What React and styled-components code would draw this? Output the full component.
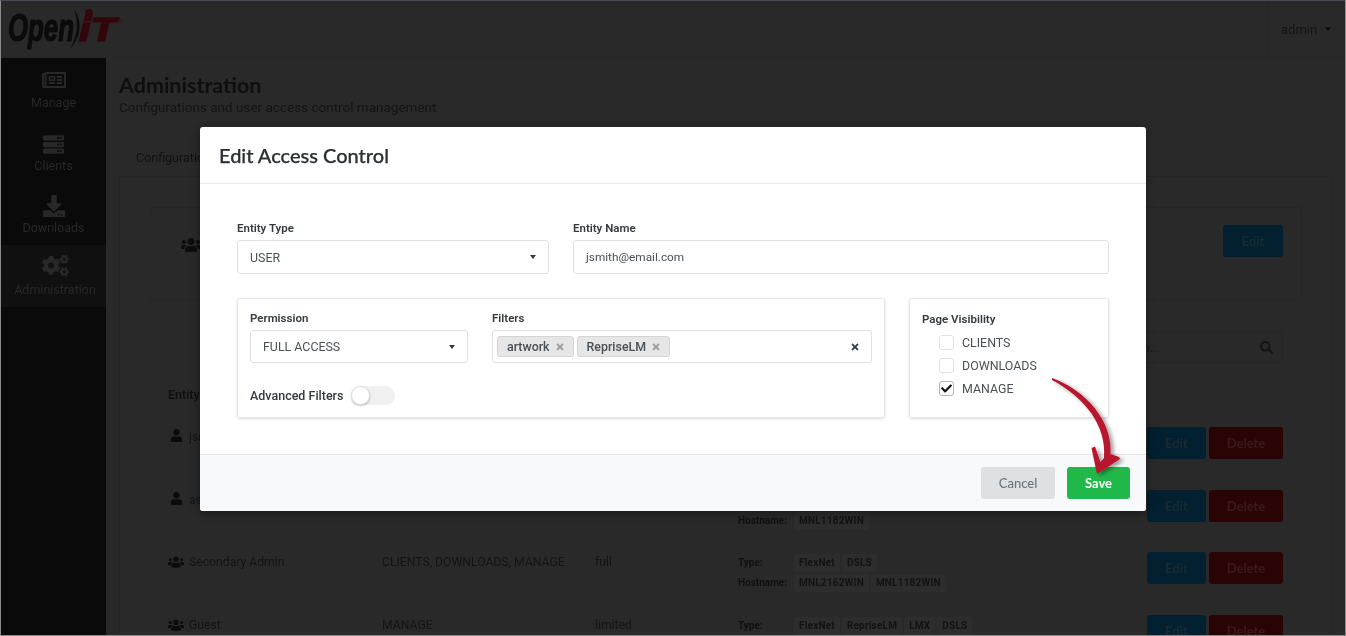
import * as React from "react";
import styled, { createGlobalStyle } from "styled-components";
import {
  FaRegNewspaper,
  FaServer,
  FaDownload,
  FaCogs,
  FaUser,
  FaUsers,
  FaSearch,
  FaTimes,
  FaCheck,
} from "react-icons/fa";

const GlobalStyle = createGlobalStyle`
  html, body {
    margin: 0;
    padding: 0;
    background: #292929;
    font-family: Roboto, "Liberation Sans", sans-serif;
  }
  * { box-sizing: border-box; }
`;

const navItems = [
  { label: "Manage", icon: FaRegNewspaper, size: 24 },
  { label: "Clients", icon: FaServer, size: 21 },
  { label: "Downloads", icon: FaDownload, size: 22 },
  { label: "Administration", icon: FaCogs, size: 27, active: true },
];

const rows = [
  { name: "jsmith@email.com", icon: FaUser, pages: "CLIENTS", perm: "full", types: ["FlexNet"], hosts: ["MNL1182WIN"] },
  { name: "asmith@email.com", icon: FaUser, pages: "MANAGE", perm: "full", types: ["DSLS"], hosts: ["MNL1182WIN"] },
  { name: "Secondary Admin", icon: FaUsers, pages: "CLIENTS, DOWNLOADS, MANAGE", perm: "full", types: ["FlexNet", "DSLS"], hosts: ["MNL2162WIN", "MNL1182WIN"] },
  { name: "Guest", icon: FaUsers, pages: "MANAGE", perm: "limited", types: ["FlexNet", "RepriseLM", "LMX", "DSLS"], hosts: [] },
];

function Logo() {
  return (
    <LogoSvg viewBox="0 0 120 44" width="120" height="44">
      <text x="0" y="33" fontFamily="Liberation Sans" fontWeight="700" fontStyle="italic" fontSize="38" fill="#0b0b0b" stroke="#0b0b0b" strokeWidth="1.2" textLength="66" lengthAdjust="spacingAndGlyphs">Open</text>
      <path d="M66 1 C74 12 74 28 62 41 C70 28 71 13 66 1 Z" fill="#0b0b0b" />
      <text x="71" y="33" fontFamily="Liberation Sans" fontWeight="700" fontStyle="italic" fontSize="33" fill="#33060c" stroke="#33060c" strokeWidth="1.7" textLength="37" lengthAdjust="spacingAndGlyphs">iT</text>
      <circle cx="81" cy="5" r="4" fill="#33060c" />
      <text x="110" y="16" fontFamily="Liberation Sans" fontSize="8" fill="#33161a">®</text>
    </LogoSvg>
  );
}

export default function App() {
  return (
    <Frame>
      <GlobalStyle />
      <Header>
        <Logo />
        <UserMenu>
          admin
          <DarkCaret />
        </UserMenu>
      </Header>
      <Body>
        <Sidebar>
          {navItems.map((item) => (
            <NavItem key={item.label} $active={item.active}>
              <item.icon size={item.size} />
              <span>{item.label}</span>
            </NavItem>
          ))}
        </Sidebar>
        <Main>
          <PageTitle>Administration</PageTitle>
          <PageSub>Configurations and user access control management</PageSub>
          <Tab>Configuration</Tab>
          <Panel>
            <OwnerCard>
              <OwnerIcon>
                <FaUsers size={20} />
              </OwnerIcon>
              <EditButton $wide>Edit</EditButton>
            </OwnerCard>
            <SearchRow>
              <SearchBox>
                <span>Search...</span>
                <FaSearch size={13} />
              </SearchBox>
            </SearchRow>
            <TableHead>
              <span>Entity</span>
              <span>Pages</span>
              <span>Permission</span>
              <span>Filters</span>
            </TableHead>
            {rows.map((row) => (
              <TableRow key={row.name}>
                <EntityCell>
                  <IconSlot>
                    <row.icon size={row.icon === FaUser ? 13 : 16} />
                  </IconSlot>
                  {row.name}
                </EntityCell>
                <span>{row.pages}</span>
                <span>{row.perm}</span>
                <div>
                  <FilterLine>
                    <FilterKey>Type:</FilterKey>
                    {row.types.map((t) => (
                      <SmallTag key={t}>{t}</SmallTag>
                    ))}
                  </FilterLine>
                  {row.hosts.length > 0 && (
                    <FilterLine>
                      <FilterKey>Hostname:</FilterKey>
                      {row.hosts.map((h) => (
                        <SmallTag key={h}>{h}</SmallTag>
                      ))}
                    </FilterLine>
                  )}
                </div>
                <RowActions>
                  <EditButton>Edit</EditButton>
                  <DeleteButton>Delete</DeleteButton>
                </RowActions>
              </TableRow>
            ))}
          </Panel>
        </Main>
      </Body>

      <Modal>
        <ModalHeader>Edit Access Control</ModalHeader>
        <ModalBody>
          <EntityRow>
            <Field>
              <Label>Entity Type</Label>
              <Control>
                USER
                <Caret />
              </Control>
            </Field>
            <Field>
              <Label>Entity Name</Label>
              <Control $lower>jsmith@email.com</Control>
            </Field>
          </EntityRow>
          <CardsRow>
            <Card $pad="12px 12px 0">
              <PermissionRow>
                <Field>
                  <Label>Permission</Label>
                  <Control $short>
                    FULL ACCESS
                    <Caret />
                  </Control>
                </Field>
                <Field>
                  <Label>Filters</Label>
                  <TagsControl>
                    <FilterTag>
                      artwork
                      <FaTimes size={10} />
                    </FilterTag>
                    <FilterTag>
                      RepriseLM
                      <FaTimes size={10} />
                    </FilterTag>
                    <ClearAll>
                      <FaTimes size={10} />
                    </ClearAll>
                  </TagsControl>
                </Field>
              </PermissionRow>
              <ToggleRow>
                Advanced Filters
                <Toggle>
                  <Knob />
                </Toggle>
              </ToggleRow>
            </Card>
            <Card $pad="13px 12px 0">
              <Label>Page Visibility</Label>
              <CheckList>
                <CheckRow>
                  <CheckBox />
                  CLIENTS
                </CheckRow>
                <CheckRow>
                  <CheckBox />
                  DOWNLOADS
                </CheckRow>
                <CheckRow>
                  <CheckBox $checked>
                    <FaCheck size={11} />
                  </CheckBox>
                  MANAGE
                </CheckRow>
              </CheckList>
            </Card>
          </CardsRow>
        </ModalBody>
        <ModalFooter>
          <CancelButton>Cancel</CancelButton>
          <SaveButton>Save</SaveButton>
        </ModalFooter>
      </Modal>

      <ArrowSvg viewBox="0 0 90 110" width="90" height="110">
        <defs>
          <filter id="arrowShadow" x="-30%" y="-30%" width="160%" height="160%">
            <feDropShadow dx="3" dy="2" stdDeviation="2" floodColor="#000" floodOpacity="0.4" />
          </filter>
        </defs>
        <path
          d="M2 8 C36 20 63 52 60.5 84 L69 87 L70 89 L47 104 L41.5 78 L45 76.5 L50.5 92 L54 88 C57 55 34 27 2 10 Z"
          fill="#b8142f"
          filter="url(#arrowShadow)"
        />
      </ArrowSvg>
    </Frame>
  );
}

const Frame = styled.div`
  position: relative;
  width: 1346px;
  height: 636px;
  overflow: hidden;
  background: #292929;
  border: 1px solid #8c8c8c;
  border-top-color: #4a4a55;
  filter: blur(0.3px);
`;

const Header = styled.header`
  display: flex;
  align-items: center;
  justify-content: space-between;
  height: 57px;
  padding-left: 7px;
  border-bottom: 1px solid #262626;
`;

const LogoSvg = styled.svg`
  display: block;
  margin-top: 1px;
`;

const UserMenu = styled.div`
  display: flex;
  align-items: center;
  justify-content: space-between;
  width: 78px;
  height: 100%;
  padding: 0 14px 0 13px;
  border-left: 1px solid #262626;
  font-size: 13px;
  color: #141414;
`;

const Body = styled.div`
  display: flex;
  height: 577px;
`;

const Sidebar = styled.nav`
  width: 105px;
  flex-shrink: 0;
  background: #0a0a0a;
`;

const NavItem = styled.div`
  display: flex;
  flex-direction: column;
  align-items: center;
  justify-content: flex-end;
  gap: 3px;
  height: 62.3px;
  padding: 0 0 10px ${(p) => (p.$active ? "3px" : "0")};
  background: ${(p) => (p.$active ? "#101010" : "transparent")};
  color: #282828;
  font-size: 12.5px;
  white-space: nowrap;
`;

const Main = styled.main`
  flex: 1;
  min-width: 0;
  padding: 15px 13px 0;
`;

const PageTitle = styled.h1`
  margin: 0;
  font-family: Lato, sans-serif;
  font-size: 21.5px;
  font-weight: 700;
  line-height: 24px;
  color: #0e0e0e;
`;

const PageSub = styled.p`
  margin: 0;
  font-size: 13.5px;
  line-height: 20px;
  color: #141414;
`;

const Tab = styled.div`
  height: 59px;
  padding: 32px 0 0 17px;
  font-size: 12.5px;
  line-height: 18px;
  color: #121212;
`;

const Panel = styled.section`
  height: 500px;
  padding: 30px 29px 0 30px;
  border: 1px solid #252525;
  border-bottom: 0;
`;

const OwnerCard = styled.div`
  display: flex;
  align-items: flex-start;
  justify-content: space-between;
  height: 93px;
  padding: 17px 18px 0 30px;
  border: 1px solid #252525;
  border-radius: 3px;
`;

const OwnerIcon = styled.div`
  padding-top: 10px;
  color: #0c0c0c;
`;

const SearchRow = styled.div`
  display: flex;
  justify-content: flex-end;
  margin: 31px 19px 0 0;
`;

const SearchBox = styled.div`
  display: flex;
  align-items: center;
  justify-content: space-between;
  width: 186px;
  height: 32px;
  padding: 0 9px 0 12px;
  border: 1px solid #252525;
  border-radius: 3px;
  font-size: 13px;
  color: #181818;
  svg {
    color: #131313;
  }
`;

const tableGrid = `
  display: grid;
  grid-template-columns: 214px 213px 143px 409px 1fr;
  padding: 0 19px 0 18px;
`;

const TableHead = styled.div`
  ${tableGrid}
  margin-top: 23px;
  height: 42px;
  font-size: 12.5px;
  font-weight: 500;
  line-height: 18px;
  color: #0f0f0f;
`;

const TableRow = styled.div`
  ${tableGrid}
  height: 62.7px;
  font-size: 12.2px;
  line-height: 18px;
  color: #141414;
`;

const EntityCell = styled.div`
  display: flex;
  align-items: flex-start;
  gap: 5px;
`;

const IconSlot = styled.span`
  display: flex;
  justify-content: center;
  width: 16px;
  padding-top: 1px;
  color: #0b0b0b;
`;

const FilterLine = styled.div`
  display: flex;
  align-items: center;
  gap: 2px;
  height: 20px;
`;

const FilterKey = styled.span`
  width: 54px;
  font-size: 10px;
  font-weight: 700;
  color: #101010;
`;

const SmallTag = styled.span`
  padding: 0 5px;
  height: 18px;
  border-radius: 2px;
  background: #2d2d2d;
  font-size: 10px;
  font-weight: 700;
  letter-spacing: 0.2px;
  line-height: 18px;
  color: #131313;
`;

const RowActions = styled.div`
  display: flex;
  gap: 3px;
  margin-top: -1px;
`;

const EditButton = styled.div`
  display: flex;
  align-items: center;
  justify-content: center;
  width: ${(p) => (p.$wide ? "60px" : "59px")};
  height: 32px;
  border-radius: 3px;
  background: #02202f;
  font-family: Lato, sans-serif;
  font-size: 13px;
  font-weight: 700;
  color: #1a2a35;
`;

const DeleteButton = styled(EditButton)`
  width: 74px;
  background: #2a0404;
  color: #3c1a1a;
`;

const Modal = styled.div`
  position: absolute;
  top: 126px;
  left: 199px;
  display: flex;
  flex-direction: column;
  width: 946px;
  height: 384px;
  overflow: hidden;
  border-radius: 3px;
  background: #ffffff;
  box-shadow: 0 2px 10px rgba(0, 0, 0, 0.4);
`;

const ModalHeader = styled.h2`
  display: flex;
  align-items: center;
  height: 57px;
  margin: 0;
  padding: 0 19px 1px;
  border-bottom: 1px solid #e9ecef;
  font-family: Lato, sans-serif;
  font-size: 20px;
  font-weight: 500;
  color: #2b3035;
  -webkit-text-stroke: 0.25px #2b3035;
`;

const ModalBody = styled.div`
  flex: 1;
  padding: 37px 37px 0;
`;

const EntityRow = styled.div`
  display: grid;
  grid-template-columns: 312px 536px;
  gap: 24px;
`;

const Field = styled.div`
  display: flex;
  flex-direction: column;
`;

const Label = styled.label`
  display: block;
  height: 14px;
  margin-bottom: 5px;
  font-size: 11.5px;
  font-weight: 600;
  line-height: 14px;
  color: #343a40;
`;

const Control = styled.div`
  display: flex;
  align-items: center;
  justify-content: space-between;
  height: ${(p) => (p.$short ? "33px" : "34px")};
  padding: 0 12px;
  border: 1px solid #dee2e6;
  border-radius: 3px;
  font-size: ${(p) => (p.$lower ? "11.8px" : "12.4px")};
  color: #495057;
`;

const Caret = styled.span`
  width: 0;
  height: 0;
  border-left: 3.5px solid transparent;
  border-right: 3.5px solid transparent;
  border-top: 4px solid #343a40;
`;

const DarkCaret = styled(Caret)`
  border-top-color: #0e0e0e;
`;

const CardsRow = styled.div`
  display: grid;
  grid-template-columns: 648px 200px;
  gap: 24px;
  margin-top: 24px;
`;

const Card = styled.div`
  height: 120px;
  padding: ${(p) => p.$pad};
  border: 1px solid #e3e5e8;
  border-radius: 3px;
  box-shadow: 0 1px 3px rgba(0, 0, 0, 0.14);
`;

const PermissionRow = styled.div`
  display: grid;
  grid-template-columns: 218px 380px;
  gap: 24px;
`;

const TagsControl = styled.div`
  display: flex;
  align-items: center;
  gap: 3px;
  height: 33px;
  padding: 0 11px 0 4px;
  border: 1px solid #dee2e6;
  border-radius: 3px;
`;

const FilterTag = styled.span`
  display: flex;
  align-items: center;
  gap: 5px;
  height: 21px;
  padding: 0 8px 0 9px;
  border: 1px solid #d2d4d6;
  border-radius: 3px;
  background: #e6e6e6;
  font-size: 12.4px;
  font-weight: 500;
  color: #495057;
  svg {
    color: #9a9a9a;
  }
`;

const ClearAll = styled.span`
  display: flex;
  margin-left: auto;
  color: #343a40;
`;

const ToggleRow = styled.div`
  display: flex;
  align-items: center;
  gap: 8px;
  margin-top: 23px;
  font-size: 12.5px;
  font-weight: 500;
  color: #343a40;
`;

const Toggle = styled.span`
  width: 44px;
  height: 19px;
  border-radius: 10px;
  background: #f0f0f1;
`;

const Knob = styled.span`
  display: block;
  width: 19px;
  height: 19px;
  border: 1px solid #e3e3e3;
  border-radius: 50%;
  background: #ffffff;
  box-shadow: 0 1px 2px rgba(0, 0, 0, 0.25);
`;

const CheckList = styled.div`
  display: flex;
  flex-direction: column;
  gap: 8px;
  margin-top: 9px;
  padding-left: 17px;
`;

const CheckRow = styled.div`
  display: flex;
  align-items: center;
  gap: 8px;
  height: 15px;
  font-size: 12.4px;
  color: #495057;
`;

const CheckBox = styled.span`
  display: flex;
  align-items: center;
  justify-content: center;
  width: 15px;
  height: 15px;
  border: 1px solid ${(p) => (p.$checked ? "#adb5bd" : "#dee2e6")};
  border-radius: 3px;
  color: #111111;
`;

const ModalFooter = styled.div`
  display: flex;
  align-items: center;
  justify-content: flex-end;
  gap: 12px;
  height: 57px;
  padding: 0 16px 0 0;
  border-top: 1px solid #e2e4e7;
  background: #f8f9fa;
`;

const FooterButton = styled.div`
  display: flex;
  align-items: center;
  justify-content: center;
  height: 32px;
  border-radius: 3px;
  font-family: Lato, sans-serif;
  font-size: 13px;
`;

const CancelButton = styled(FooterButton)`
  width: 74px;
  background: #dfe0e2;
  color: #6c757d;
  font-weight: 500;
`;

const SaveButton = styled(FooterButton)`
  width: 63px;
  background: #21b84a;
  color: #ffffff;
  font-weight: 700;
`;

const ArrowSvg = styled.svg`
  position: absolute;
  top: 369px;
  left: 1049px;
  overflow: visible;
`;
